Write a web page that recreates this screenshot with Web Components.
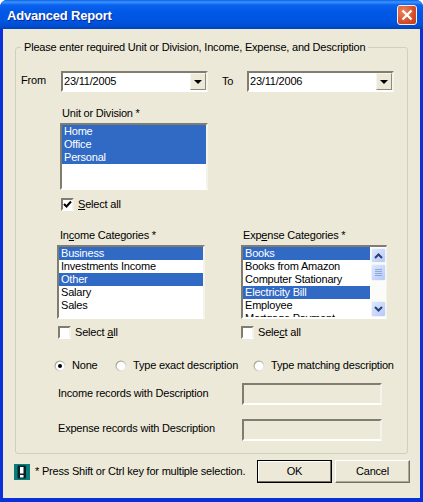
<!DOCTYPE html>
<html><head><meta charset="utf-8">
<style>
html,body{margin:0;padding:0;background:#fff}
body{width:423px;height:502px;overflow:hidden;font:11px/13px "Liberation Sans",Arial,sans-serif;letter-spacing:-.2px;color:#000}
u{text-decoration:underline}
</style></head><body>
<x-window heading="Advanced Report">
  <x-group legend="Please enter required Unit or Division, Income, Expense, and Description">
    <x-row style="padding-left:5px;align-items:center">
      <x-label style="width:40px;margin-top:-3px">From</x-label>
      <x-combo value="23/11/2005"></x-combo>
      <x-label style="width:25px;margin-left:14px">To</x-label>
      <x-combo value="23/11/2006"></x-combo>
    </x-row>
    <x-stack style="margin:15px 0 0 44px">
      <x-label style="padding-left:2px">Unit or Division *</x-label>
      <x-listbox style="width:148px;height:67px;margin-top:3px" items="Home|Office|Personal" selected="0,1,2"></x-listbox>
      <x-check checked style="margin:8px 0 0 1px"><u>S</u>elect all</x-check>
    </x-stack>
    <x-row style="margin:18px 0 0 41px">
      <x-stack style="width:148px">
        <x-label style="padding-left:3px">In<u>c</u>ome Categories *</x-label>
        <x-listbox style="width:148px;height:74px;margin-top:3px" items="Business|Investments Income|Other|Salary|Sales" selected="0,2"></x-listbox>
        <x-check style="margin:7px 0 0 1px">Select <u>a</u>ll</x-check>
      </x-stack>
      <x-stack style="width:146px;margin-left:36px">
        <x-label style="padding-left:2px">Exp<u>e</u>nse Categories *</x-label>
        <x-listbox scroll style="width:146px;height:74px;margin-top:3px" items="Books|Books from Amazon|Computer Stationary|Electricity Bill|Employee|Mortgage Payment" selected="0,3"></x-listbox>
        <x-check style="margin:7px 0 0 0">Sele<u>c</u>t all</x-check>
      </x-stack>
    </x-row>
    <x-row style="margin:20px 0 0 38px">
      <x-radio checked style="width:61px">None</x-radio>
      <x-radio style="width:138px">Type exact description</x-radio>
      <x-radio>Type matching description</x-radio>
    </x-row>
    <x-field style="margin-top:11px;height:22px;--t:4px">Income records with Description</x-field>
    <x-field style="margin-top:14px;height:22px;--t:3px">Expense records with Description</x-field>
  </x-group>
  <x-row style="margin:6px 0 0 -1px;height:23px;align-items:center;width:396px">
    <x-notice></x-notice>
    <x-label style="margin-left:5px;margin-top:-1px">* Press Shift or Ctrl key for multiple selection.</x-label>
    <x-button default style="margin-left:auto">OK</x-button>
    <x-button style="margin-left:3px">Cancel</x-button>
  </x-row>
</x-window>
<script>
function def(name, css, html){
  customElements.define(name, class extends HTMLElement{
    connectedCallback(){
      if(this.shadowRoot) return;
      const s=this.attachShadow({mode:'open'});
      s.innerHTML='<style>'+css+'</style>'+(typeof html==='function'?html(this):html);
    }
  });
}
const esc=t=>t.replace(/&/g,'&amp;');
def('x-row',':host{display:flex}','<slot></slot>');
def('x-stack',':host{display:flex;flex-direction:column}','<slot></slot>');
def('x-label',':host{display:block;line-height:13px;white-space:nowrap;flex:none}','<slot></slot>');
def('x-window',`
:host{display:flex;flex-direction:column;width:423px;height:502px;box-sizing:border-box;background:#0831d9;border-radius:7px 7px 0 0;overflow:hidden}
.bar{flex:none;height:29px;display:flex;align-items:center;background:linear-gradient(180deg,#0a5fe6 0,#3d95ff 2px,#0a62ee 5px,#0058e6 12px,#0055e0 20px,#0050d8 25px,#0043b8 29px)}
.t{margin-left:7px;font:bold 13px/16px "Liberation Sans",Arial,sans-serif;color:#fff;text-shadow:1px 1px 0 #0a2a90;letter-spacing:-.2px;margin-top:3px}
.x{margin-left:auto;margin-right:6px;margin-top:1px;width:20px;height:20px;box-sizing:border-box;border:1px solid #f2f2f2;border-radius:3px;background:radial-gradient(circle at 30% 30%,#e9865f,#d9512c 55%,#c03a14);display:flex;align-items:center;justify-content:center}
.body{flex:1;margin:0 3px 4px;background:#ece9d8;padding:18px 12px 0}
`,h=>`<div class="bar"><span class="t">${h.getAttribute('heading')}</span><span class="x"><svg width="14" height="14" viewBox="0 0 14 14"><path d="M2.5 2.5L11.5 11.5M11.5 2.5L2.5 11.5" stroke="#fff" stroke-width="2.4"/></svg></span></div><div class="body"><slot></slot></div>`);
def('x-group',`
:host{display:block;position:relative;width:393px;height:407px;box-sizing:border-box;border:1px solid #d0d0bf;border-radius:3px;padding-top:23px}
.l{position:absolute;left:5px;top:-7px;background:#ece9d8;padding:0 3px;white-space:nowrap;line-height:13px}
`,h=>`<span class="l">${h.getAttribute('legend')}</span><slot></slot>`);
def('x-combo',`
:host{display:flex;width:147px;height:21px;box-sizing:border-box;border:2px solid;border-color:#807c70 #f4f3ea #fff #807c70;background:#fff;flex:none}
.v{flex:1;padding:1px 0 0 1px;line-height:15px}
.b{width:16px;background:#ece9d8;border-left:1px solid #f6f5ee;border-top:1px solid #f6f5ee;border-right:1px solid #8d8a7e;border-bottom:1px solid #8d8a7e;box-sizing:border-box;display:flex;align-items:center;justify-content:center}
.b i{width:0;height:0;border:4px solid transparent;border-top:4px solid #000;border-bottom:0}
`,h=>`<span class="v">${h.getAttribute('value')}</span><span class="b"><i></i></span>`);
def('x-listbox',`
:host{display:block;box-sizing:border-box;border:2px solid;border-color:#807c70 #f4f3ea #fff #807c70;background:#fff;overflow:hidden;position:relative}
:host([scroll]){border-right-width:1px}
.rows{display:flex;flex-direction:column}
.i{height:13px;line-height:13px;padding-left:2px;white-space:nowrap;flex:none}
.i.s{background:#316ac5;color:#fff}
.sb{position:absolute;right:0;top:0;bottom:0;width:15px;background:#fbfbf8;display:flex;flex-direction:column;padding-top:1px}
.sb span{display:flex;align-items:center;justify-content:center;box-sizing:border-box;width:15px;border:1px solid #f0f4ff;border-radius:2px;background:linear-gradient(135deg,#dde8fe,#b7c9f6)}
.u{height:15px}
.d{height:16px}
.th{height:17px;margin-top:1px}
.sp{flex:1}
svg{display:block}
`,h=>{
  const sel=(h.getAttribute('selected')||'').split(',');
  const scroll=h.hasAttribute('scroll');
  const rows=h.getAttribute('items').split('|').map((t,i)=>`<div class="i${sel.includes(String(i))?' s':''}">${esc(t)}</div>`).join('');
  const sb=scroll?`<div class="sb"><span class="u"><svg width="9" height="6"><path d="M1 5L4.5 1.5L8 5" fill="none" stroke="#2a3f7a" stroke-width="2"/></svg></span><span class="th"><svg width="7" height="8"><path d="M0 .5H7M0 2.5H7M0 4.5H7M0 6.5H7" stroke="#8fa6e0"/></svg></span><i class="sp"></i><span class="d"><svg width="9" height="6"><path d="M1 1L4.5 4.5L8 1" fill="none" stroke="#2a3f7a" stroke-width="2"/></svg></span></div>`:'';
  return `<div class="rows" style="${scroll?'margin-right:16px':''}">${rows}</div>${sb}`;
});
def('x-check',`
:host{display:flex;align-items:center;height:13px;white-space:nowrap}
.b{width:13px;height:13px;box-sizing:border-box;border:2px solid;border-color:#807c70 #f4f3ea #fff #807c70;background:#fff;flex:none;margin-right:4px;display:block}
svg{display:block}
`,h=>`<span class="b">${h.hasAttribute('checked')?'<svg width="9" height="9"><path d="M1 4L3.5 6.5L8 1.5" fill="none" stroke="#000" stroke-width="2"/></svg>':''}</span><span><slot></slot></span>`);
def('x-radio',`
:host{display:flex;align-items:center;height:13px;white-space:nowrap;flex:none}
svg{display:block;margin-right:6px;flex:none}
`,h=>`<svg width="12" height="12" viewBox="0 0 12 12"><defs><linearGradient id="g" x1="0" y1="0" x2="1" y2="1"><stop offset="0" stop-color="#8f8d80"/><stop offset=".5" stop-color="#c8c6b8"/><stop offset="1" stop-color="#fff"/></linearGradient></defs><circle cx="6" cy="6" r="5.5" fill="url(#g)"/><circle cx="6" cy="6" r="4.3" fill="#fff"/>${h.hasAttribute('checked')?'<circle cx="6" cy="6" r="2" fill="#000"/>':''}</svg><span><slot></slot></span>`);
def('x-field',`
:host{display:flex;align-items:flex-start;padding-left:42px}
.l{width:185px;flex:none;white-space:nowrap;margin-top:var(--t,4px)}
.i{width:140px;height:100%;margin-left:-1px;box-sizing:border-box;border:2px solid;border-color:#807c70 #f4f3ea #fff #807c70;background:#ece9d8}
`,`<span class="l"><slot></slot></span><span class="i"></span>`);
def('x-notice',`
:host{display:block;width:16px;height:16px;background:#0a7b78;flex:none}
svg{display:block}
`,`<svg width="16" height="16" viewBox="0 0 16 16"><rect x="3.5" y="1.5" width="8.5" height="13" rx="1" fill="#04202a"/><rect x="6" y="3" width="3.5" height="6.5" fill="#fff"/><rect x="6" y="11" width="3.5" height="2.5" fill="#fff"/></svg>`);
def('x-button',`
:host{display:flex;align-items:center;justify-content:center;width:75px;height:23px;box-sizing:border-box;background:#ece9d8;border:1px solid;border-color:#fff #716f64 #716f64 #fff;box-shadow:inset -1px -1px 0 #aca899;flex:none}
:host([default]){border:1px solid #000;box-shadow:inset -1px -1px 0 #716f64,inset 1px 1px 0 #fff}
`,`<slot></slot>`);
</script>
</body></html>
